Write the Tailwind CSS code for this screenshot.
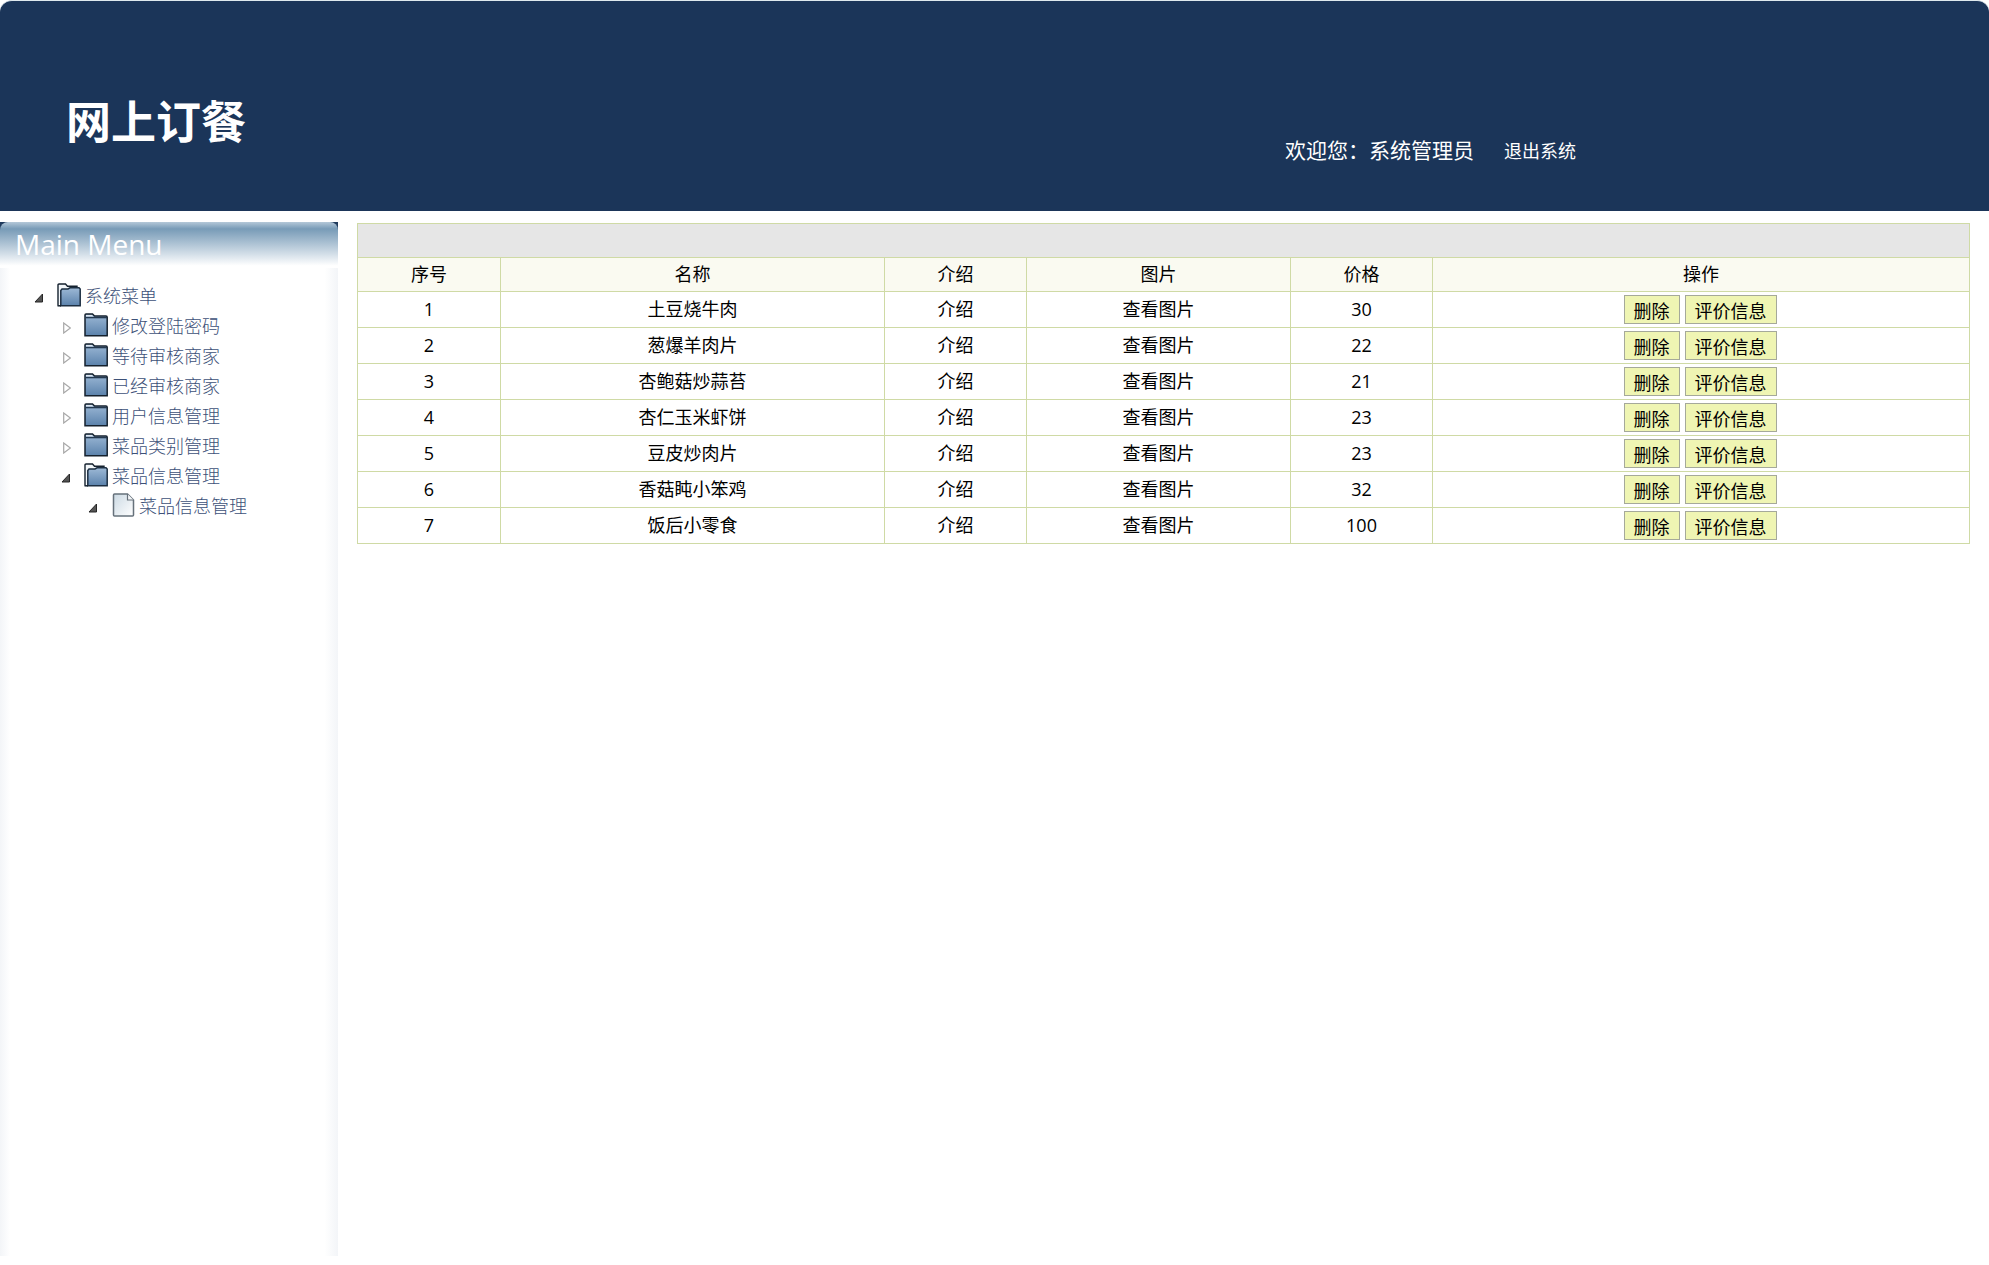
<!DOCTYPE html>
<html lang="zh-CN">
<head>
    <meta charset="UTF-8">
    <meta name="viewport" content="width=device-width, initial-scale=1.0">
    <title>网上订餐</title>
    <script src="https://cdn.jsdelivr.net/npm/@tailwindcss/browser@4"></script>
</head>
<body class="h-screen flex flex-col bg-white font-['Open_Sans','Noto_Sans_CJK_SC',sans-serif]">
    <!-- icon symbols -->
    <svg class="absolute w-0 h-0" aria-hidden="true">
        <defs>
            <linearGradient id="blue" x1="0" y1="0" x2="0" y2="1">
                <stop offset="0" stop-color="#9db9d6"/>
                <stop offset="1" stop-color="#5b82ac"/>
            </linearGradient>
            <linearGradient id="paper" x1="0" y1="0" x2="1" y2="1">
                <stop offset="0" stop-color="#cbd9e3"/>
                <stop offset="1" stop-color="#ffffff"/>
            </linearGradient>
            <symbol id="folder" viewBox="0 0 24 24">
                <path d="M1 22.800V2Q1 1 2 1H8.500L10.500 3H22Q23.200 3 23.200 4.300V22.800Z" fill="url(#blue)" stroke="#15212e" stroke-width="1.500"/>
                <path d="M2 2H8L9.200 3.400H2Z" fill="#dfe8f1"/>
                <path d="M1.500 4.600H23" stroke="#23384f" stroke-width="1.400"/>
            </symbol>
            <symbol id="folder-open" viewBox="0 0 24 24">
                <path d="M1 22.500V2Q1 1 2 1H8.500L10.500 3.200H20V6" fill="#f3f7fa" stroke="#15212e" stroke-width="1.400"/>
                <path d="M3.800 22.800V7.500L5 6H11L13 4.800H22L23.200 6V22.800Z" fill="url(#blue)" stroke="#1d2f42" stroke-width="1.500"/>
                <path d="M0.500 22.800H4" stroke="#15212e" stroke-width="1.500"/>
            </symbol>
            <symbol id="file" viewBox="-2 0 24 24">
                <path d="M1.500 1H14.500L20.500 7V22Q20.500 23 19.500 23H1.500Q0.500 23 0.500 22V2Q0.500 1 1.500 1Z" fill="url(#paper)" stroke="#66717b" stroke-width="1.500"/>
                <path d="M14.500 1V7H20.500" fill="#f4f7f9" stroke="#66717b" stroke-width="1.200"/>
            </symbol>
            <symbol id="opened" viewBox="0 0 10 12">
                <path d="M8.500 2V10H1Z" fill="#555555" stroke="#262626" stroke-width="1"/>
            </symbol>
            <symbol id="closed" viewBox="0 0 10 12">
                <path d="M2.700 1V11L9.400 6Z" fill="#ffffff" stroke="#a8a8a8" stroke-width="1.200"/>
            </symbol>
        </defs>
    </svg>

    <header class="h-[211px] shrink-0 border-t border-[#dfe9ee] rounded-t-xl bg-[#1b3559] text-white flex items-start">
        <h1 class="flex-1 pl-[66px] pt-[88px] text-[45px] leading-[66px] font-bold">网上订餐</h1>
        <div class="w-[704px] pt-[133px] flex items-baseline gap-[30px] leading-8">
            <span class="text-[21px]">欢迎您：系统管理员</span>
            <a href="#" class="text-lg leading-8">退出系统</a>
        </div>
    </header>

    <div class="flex-1 flex pt-[11px] pb-[9px]">
        <aside class="w-[338px] shrink-0 bg-linear-to-r from-[#f3f5f8] via-white via-3% to-white">
            <div class="h-full bg-linear-to-l from-[#f3f5f8] to-transparent to-4%">
                <div class="bg-[#1f3a5c]">
                    <h2 class="h-[46px] pl-[15px] rounded-t-lg bg-linear-to-b from-[#b4c8d8] via-[#789bb7] via-15% to-white to-95% text-white text-[28px] leading-[44px]">Main Menu</h2>
                </div>
                <ul id="menu" class="pt-[13px] text-lg leading-[30px] font-light text-[#3d5178]"></ul>
            </div>
        </aside>

        <main class="flex-1 pl-[19px] pr-[19px] pt-px">
            <table class="w-full table-fixed border-collapse border border-[#cfdaa5] text-lg leading-7 text-center text-black">
                <colgroup>
                    <col class="w-[143px]">
                    <col class="w-[384px]">
                    <col class="w-[142px]">
                    <col class="w-[264px]">
                    <col class="w-[142px]">
                    <col>
                </colgroup>
                <thead>
                    <tr class="h-[34px] bg-[#e6e6e6]">
                        <td colspan="6" class="border border-[#cfdaa5]"></td>
                    </tr>
                    <tr class="h-[34px] bg-[#fafaf1]">
                        <th class="border border-[#cfdaa5] pb-[2px] font-normal">序号</th>
                        <th class="border border-[#cfdaa5] pb-[2px] font-normal">名称</th>
                        <th class="border border-[#cfdaa5] pb-[2px] font-normal">介绍</th>
                        <th class="border border-[#cfdaa5] pb-[2px] font-normal">图片</th>
                        <th class="border border-[#cfdaa5] pb-[2px] font-normal">价格</th>
                        <th class="border border-[#cfdaa5] pb-[2px] font-normal">操作</th>
                    </tr>
                </thead>
                <tbody id="dishes"></tbody>
            </table>
        </main>
    </div>

    <script>
        const menu = [
            { level: 0, icon: 'folder-open', name: '系统菜单' },
            { level: 1, icon: 'folder', name: '修改登陆密码' },
            { level: 1, icon: 'folder', name: '等待审核商家' },
            { level: 1, icon: 'folder', name: '已经审核商家' },
            { level: 1, icon: 'folder', name: '用户信息管理' },
            { level: 1, icon: 'folder', name: '菜品类别管理' },
            { level: 1, icon: 'folder-open', name: '菜品信息管理' },
            { level: 2, icon: 'file', name: '菜品信息管理' }
        ];
        const indent = ['pl-[34px]', 'pl-[61px]', 'pl-[88px]'];

        document.getElementById('menu').innerHTML = menu.map(item => `
            <li class="${indent[item.level]} h-[30px] flex items-center">
                <svg class="w-[10px] h-3 mr-[13px] mt-1"><use href="#${item.icon === 'folder' ? 'closed' : 'opened'}"/></svg>
                <svg class="w-6 h-6 mr-1 mb-[2px]"><use href="#${item.icon}"/></svg>
                <a href="#">${item.name}</a>
            </li>
        `).join('');

        const dishes = [
            ['土豆烧牛肉', 30],
            ['葱爆羊肉片', 22],
            ['杏鲍菇炒蒜苔', 21],
            ['杏仁玉米虾饼', 23],
            ['豆皮炒肉片', 23],
            ['香菇盹小笨鸡', 32],
            ['饭后小零食', 100]
        ];

        document.getElementById('dishes').innerHTML = dishes.map(([name, price], index) => `
            <tr class="h-9">
                <td class="border border-[#cfdaa5] pb-[2px]">${index + 1}</td>
                <td class="border border-[#cfdaa5] pb-[2px]">${name}</td>
                <td class="border border-[#cfdaa5] pb-[2px]"><a href="#">介绍</a></td>
                <td class="border border-[#cfdaa5] pb-[2px]"><a href="#">查看图片</a></td>
                <td class="border border-[#cfdaa5] pb-[2px]">${price}</td>
                <td class="border border-[#cfdaa5] pr-[2px]">
                    <div class="flex justify-center gap-[5px]">
                        <button class="h-[29px] px-[9px] pt-px border border-[#a5a99a] bg-[#eff5b3] leading-7">删除</button>
                        <button class="h-[29px] px-[9px] pt-px border border-[#a5a99a] bg-[#eff5b3] leading-7">评价信息</button>
                    </div>
                </td>
            </tr>
        `).join('');
    </script>
</body>
</html>
